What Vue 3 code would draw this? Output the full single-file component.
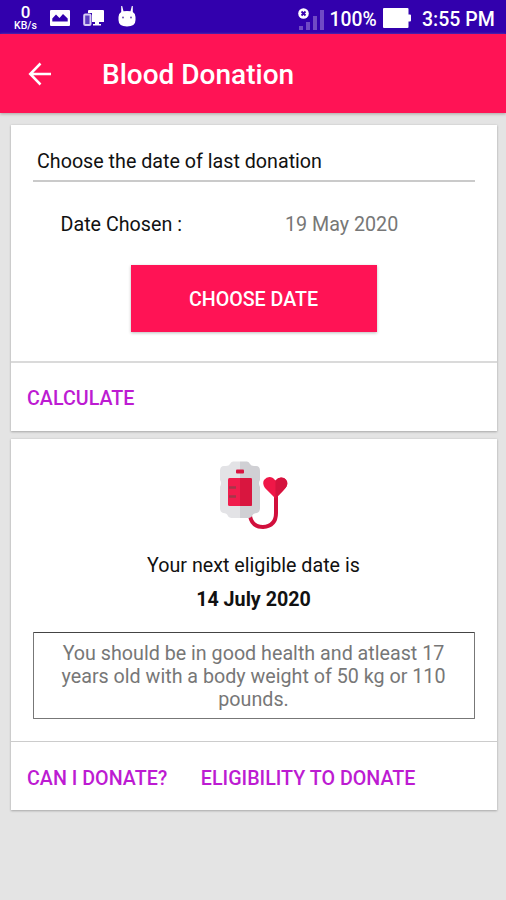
<script setup>
const signalBars = [4, 8, 14, 20]
const lastDonation = '19 May 2020'
const nextEligible = '14 July 2020'
</script>

<template>
  <div class="screen">
    <header class="status">
      <div class="speed"><b>0</b><span>KB/s</span></div>
      <svg class="photo" width="20" height="16" viewBox="0 0 20 16">
        <path fill="#fff" fill-rule="evenodd" d="M1 0H19Q20 0 20 1V15Q20 16 19 16H1Q0 16 0 15V1Q0 0 1 0ZM2.300 11.500V8.500L6 4.500L9.500 8L13 4L17.700 8.500V11.500Z" />
      </svg>
      <svg class="devices" width="21" height="17" viewBox="0 0 21 17">
        <path fill="#fff" d="M5 1Q5 0 6 0H20Q21 0 21 1V12H16V14H18V15.500H10V14H12V12H9V3H5Z" />
        <rect x="1.200" y="4.500" width="6.300" height="10.500" rx="1" fill="#5d3bc0" stroke="#d7ccf3" stroke-width="2" />
      </svg>
      <svg class="droid" width="18" height="21" viewBox="0 0 18 21">
        <path fill="#fff" d="M3.200 0H4.200L5.500 5.300Q9 4.700 12.500 5.300L13.800 0H14.800V6Q17.500 7.500 17.500 11V14Q17.500 20.500 9 20.500Q.5 20.500 .5 14V11Q.5 7.500 3.200 6Z" />
        <circle cx="5" cy="11.500" r="1" fill="#6b50b8" /><circle cx="13" cy="11.500" r="1" fill="#6b50b8" />
      </svg>
      <div class="spacer"></div>
      <div class="signal">
        <i v-for="h in signalBars" :key="h" :style="{ height: h + 'px' }"></i>
        <svg width="11" height="11" viewBox="0 0 11 11">
          <circle cx="5.500" cy="5.500" r="5.300" fill="#fff" />
          <path d="M3.500 3.500L7.500 7.500M7.500 3.500L3.500 7.500" stroke="#3800ae" stroke-width="1.800" />
        </svg>
      </div>
      <span class="percent">100%</span>
      <svg class="battery" width="28" height="20" viewBox="0 0 28 20">
        <path fill="#fff" d="M1 0H24.500Q25.500 0 25.500 1V6.500H27Q28 6.500 28 7.500V12.500Q28 13.500 27 13.500H25.500V19Q25.500 20 24.500 20H1Q0 20 0 19V1Q0 0 1 0Z" />
      </svg>
      <span class="clock">3:55 PM</span>
    </header>

    <nav class="appbar">
      <svg width="24" height="24" viewBox="0 0 24 24" fill="none" stroke="#fff" stroke-width="2.500">
        <path d="M23 12H3M12.500 1.500L2.200 12L12.500 22.500" />
      </svg>
      <h1>Blood Donation</h1>
    </nav>

    <main>
      <section class="card first">
        <div class="heading">Choose the date of last donation</div>
        <div class="date-row">
          <span class="label">Date Chosen :</span>
          <span class="value">{{ lastDonation }}</span>
        </div>
        <button class="pick">CHOOSE DATE</button>
        <footer><a>CALCULATE</a></footer>
      </section>

      <section class="card second">
        <svg class="bag" width="70" height="70" viewBox="0 0 70 70">
          <path fill="none" stroke="#d10f3c" stroke-width="4" d="M31 55Q33 66 44 66Q57 65 57 52V32" />
          <path fill="#e3e3e6" d="M21 .5H14Q12 .5 11 3Q10 5 7 5H5Q1 5 1 10V19Q3 22 1 26V47Q1 51 4 52Q8 52 9 55Q10 57 14 57H21Z" />
          <path fill="#d0d0d4" d="M21 .5H28Q30 .5 31 3Q32 5 35 5H37Q41 5 41 10V19Q39 22 41 26V47Q41 51 38 52Q34 52 33 55Q32 57 28 57H21Z" />
          <rect x="17" y="8.500" width="8" height="4" rx="1" fill="#d91440" />
          <rect x="9" y="17" width="24" height="28" rx="1.500" fill="#f01d4d" />
          <path fill="#d9163f" d="M21 17H31.500Q33 17 33 18.500V43.500Q33 45 31.500 45H21Z" />
          <path stroke="#a43649" stroke-width="2.500" d="M10 26.500H17M10 35.500H17" />
          <path fill="#ef1747" d="M56.500 37.500L46 27Q43 22.500 45 19Q49 14 54 17L56.500 19.500Q60 15 65 17Q70 20 67.500 25.500Q66.500 27.500 56.500 37.500Z" />
          <path fill="#d5133e" d="M56.500 19.500Q60 15 65 17Q70 20 67.500 25.500Q66.500 27.500 56.500 37.500Z" />
        </svg>
        <p class="next">Your next eligible date is</p>
        <p class="result">{{ nextEligible }}</p>
        <div class="note">
          <span>You should be in good health and atleast 17</span>
          <span>years old with a body weight of 50 kg or 110</span>
          <span>pounds.</span>
        </div>
        <footer><a>CAN I DONATE?</a><a class="elig">ELIGIBILITY TO DONATE</a></footer>
      </section>
    </main>
  </div>
</template>

<style>
body { background: #e4e4e4; }
</style>

<style scoped>
* { box-sizing: border-box; }
.screen { width: 506px; height: 900px; overflow: hidden; background: #e4e4e4; font-family: Roboto, sans-serif; font-size: 19.700px; color: #111; white-space: nowrap; }
.status { height: 34px; display: flex; align-items: flex-start; background: #3200ad; color: #fff; font-weight: 500; }
.speed { width: 26px; margin-left: 12.500px; padding-top: 5px; display: flex; flex-direction: column; align-items: center; font-size: 10.500px; line-height: 12px; }
.speed b { font-size: 17px; line-height: 15px; font-weight: 500; }
.photo { margin: 10px 0 0 11px; }
.devices { margin: 10px 0 0 13px; }
.droid { margin: 6px 0 0 14px; }
.spacer { flex: 1; }
.signal { position: relative; width: 25px; height: 30px; display: flex; align-items: flex-end; gap: 3px; }
.signal i { width: 4px; background: #7049c5; }
.signal svg { position: absolute; left: -1px; top: 8px; }
.percent { width: 48px; margin-left: 6px; line-height: 39px; font-size: 19.300px; }
.battery { margin: 8px 0 0 5.500px; }
.clock { width: 73px; margin: 0 11px 0 11px; line-height: 39px; font-size: 19.500px; }
.appbar { position: relative; height: 79px; display: flex; align-items: center; padding: 0 0 0 28px; background: #ff1355; color: #fff; box-shadow: 0 1px 3px #aaa29f; }
.appbar h1 { margin: 3px 0 0 50px; font-size: 28px; font-weight: 500; line-height: 36px; }
main { padding: 11.500px 9.500px 0 10.500px; display: flex; flex-direction: column; gap: 8px; }
.card { background: #fff; box-shadow: 0 1px 2px #aaa, 0 0 2px #ccc; display: flex; flex-direction: column; }
.first { height: 306.500px; }
.second { height: 371px; align-items: center; }
.heading { margin: 0 22px; height: 57px; padding: 25px 0 0 4.500px; line-height: 24px; border-bottom: 2px solid #cacaca; }
.date-row { display: flex; padding: 31px 0 0 50px; line-height: 24px; }
.label { width: 224.500px; }
.value { color: #777; }
.pick { align-self: center; width: 246px; height: 67px; margin: 28.500px 0 0; padding: 0; border: 0; background: #ff1355; color: #fff; font: 500 19.650px/69px Roboto, sans-serif; box-shadow: 0 1px 3px #bbb; }
footer { align-self: stretch; margin-top: auto; height: 70px; display: flex; padding-left: 16.500px; border-top: 2px solid #dadada; color: #bd1bd2; font-weight: 500; line-height: 72px; }
.second footer { border-top-width: 1px; border-color: #ccc; line-height: 74px; height: 69.500px; }
.elig { margin-left: 33.500px; }
.bag { margin: 21.500px 0 0 1px; }
p { margin: 0; }
.next { margin-top: 23px; line-height: 24px; }
.result { margin-top: 10px; line-height: 24px; font-weight: 700; }
.note { width: 442px; height: 87px; margin-top: 20px; padding-top: 9px; border: 1px solid #777; border-top-color: #444; border-radius: 1px; display: flex; flex-direction: column; align-items: center; line-height: 23px; color: #777; }
</style>
